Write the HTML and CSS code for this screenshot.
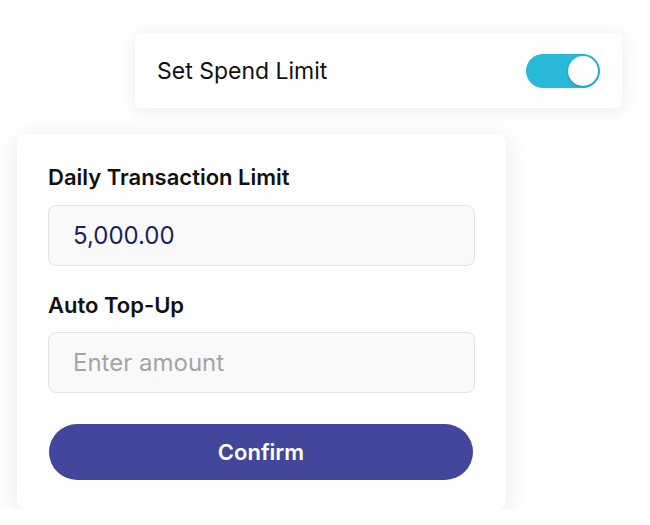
FILE: index.html
```html
<!DOCTYPE html>
<html lang="en">
<head>
    <meta charset="UTF-8">
    <meta name="viewport" content="width=device-width, initial-scale=1.0">
    <title>Spend Limit</title>
    <link rel="stylesheet" href="styles.css">
</head>
<body>
    <div class="page">
        <div class="limit-card">
            <span class="limit-title">Set Spend Limit</span>
            <div class="toggle on">
                <div class="knob"></div>
            </div>
        </div>

        <form class="form-card">
            <label class="field-label" for="daily">Daily Transaction Limit</label>
            <input class="field-input" id="daily" type="text" value="5,000.00">

            <label class="field-label second" for="topup">Auto Top-Up</label>
            <input class="field-input" id="topup" type="text" placeholder="Enter amount">

            <button class="confirm-btn" type="button">Confirm</button>
        </form>
    </div>
</body>
</html>
```

FILE: styles.css
```css
body {
    margin: 0;
    font-family: Inter, "Noto Sans", Arial, sans-serif;
    background-color: #fff;
    color: #111;
}
.page {
    padding-top: 33px;
}
.limit-card {
    margin-left: 135px;
    width: 487px;
    height: 75px;
    box-sizing: border-box;
    padding: 1px 22px 0 22px;
    display: flex;
    align-items: center;
    justify-content: space-between;
    background: #fff;
    border-radius: 5px;
    box-shadow: 0 2px 18px rgba(0, 0, 0, 0.09);
}
.limit-title {
    font-size: 23px;
    color: #111;
}
.toggle {
    width: 74px;
    height: 34px;
    margin-top: -1px;
    border-radius: 17px;
    background: #27b9d7;
    display: flex;
    align-items: center;
    justify-content: flex-end;
    padding: 0 2px;
    box-sizing: border-box;
}
.knob {
    width: 30px;
    height: 30px;
    border-radius: 50%;
    background: #fff;
    box-shadow: 0 1px 3px rgba(0, 0, 0, 0.25);
}
.form-card {
    margin: 26px 0 0 17px;
    width: 489px;
    box-sizing: border-box;
    padding: 31px 31px 29px 31px;
    display: flex;
    flex-direction: column;
    background: #fff;
    border-radius: 8px;
    box-shadow: 0 4px 24px rgba(0, 0, 0, 0.1);
}
.field-label {
    font-size: 22px;
    line-height: 25px;
    font-weight: 600;
    color: #111;
    margin-bottom: 15px;
}
.field-label.second {
    margin-top: 27px;
    margin-bottom: 14px;
}
.field-input {
    height: 61px;
    box-sizing: border-box;
    padding: 0 24px;
    font-family: inherit;
    font-size: 24px;
    color: #1d1f5c;
    background: #f9f9f9;
    border: 1px solid #e3e3e3;
    border-radius: 8px;
    outline: none;
}
.field-input::placeholder {
    color: #a4a4a4;
}
.confirm-btn {
    margin: 31px 2px 0 1px;
    height: 56px;
    border: none;
    border-radius: 28px;
    background: #43479b;
    color: #fff;
    font-family: inherit;
    font-size: 22px;
    font-weight: 600;
    cursor: pointer;
}
```
